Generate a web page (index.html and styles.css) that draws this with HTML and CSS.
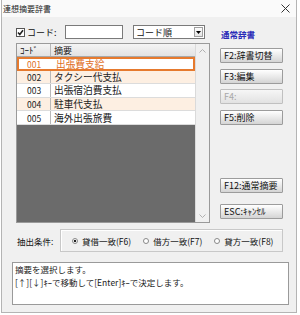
FILE: index.html
```html
<!DOCTYPE html>
<html lang="ja">
<head>
    <meta charset="UTF-8">
    <title>連想摘要辞書</title>
    <link rel="stylesheet" href="styles.css">
</head>
<body>
    <div class="window">
        <div class="titlebar">
            <span class="title">連想摘要辞書</span>
            <svg class="close" width="9" height="9" viewBox="0 0 9 9">
                <path d="M0.5 0.5 L8.5 8.5 M8.5 0.5 L0.5 8.5" stroke="#333" stroke-width="1" fill="none"/>
            </svg>
        </div>

        <div class="content">
            <div class="main">
                <!-- 検索行 -->
                <div class="search">
                    <svg class="check" width="9" height="9" viewBox="0 0 9 9">
                        <rect x="0.5" y="0.5" width="8" height="8" fill="#fff" stroke="#555"/>
                        <path d="M2 4.5 L3.8 6.5 L7 2.3" stroke="#222" stroke-width="1.6" fill="none"/>
                    </svg>
                    <label class="search-label">コード:</label>
                    <input class="code-input" type="text">
                    <div class="select">
                        <span class="select-text">コード順</span>
                        <span class="select-btn">
                            <svg width="5" height="3" viewBox="0 0 5 3"><path d="M0 0 H5 L2.5 3 Z" fill="#000"/></svg>
                        </span>
                    </div>
                </div>
                <div class="dict-name">通常辞書</div>

                <!-- 一覧 -->
                <div class="list">
                    <div class="list-body">
                        <div class="list-head">
                            <span class="col-code">ｺｰﾄﾞ</span>
                            <span class="col-name">摘要</span>
                        </div>
                        <div class="row selected"><span class="col-code">001</span><span class="col-name">出張費支給</span></div>
                        <div class="row alt"><span class="col-code">002</span><span class="col-name">タクシー代支払</span></div>
                        <div class="row"><span class="col-code">003</span><span class="col-name">出張宿泊費支払</span></div>
                        <div class="row alt"><span class="col-code">004</span><span class="col-name">駐車代支払</span></div>
                        <div class="row"><span class="col-code">005</span><span class="col-name">海外出張旅費</span></div>
                        <div class="list-empty"></div>
                    </div>
                    <div class="scrollbar">
                        <svg width="7" height="4" viewBox="0 0 7 4"><path d="M0.5 3.5 L3.5 0.5 L6.5 3.5" stroke="#b0b0b0" fill="none"/></svg>
                        <svg width="7" height="4" viewBox="0 0 7 4"><path d="M0.5 0.5 L3.5 3.5 L6.5 0.5" stroke="#b0b0b0" fill="none"/></svg>
                    </div>
                </div>

                <!-- ボタン -->
                <div class="buttons">
                    <div class="btn-group">
                        <button class="btn">F2:辞書切替</button>
                        <button class="btn">F3:編集</button>
                        <button class="btn" disabled>F4:</button>
                        <button class="btn">F5:削除</button>
                    </div>
                    <div class="btn-group bottom">
                        <button class="btn">F12:通常摘要</button>
                        <button class="btn">ESC:ｷｬﾝｾﾙ</button>
                    </div>
                </div>
            </div>

            <!-- 抽出条件 -->
            <div class="filter">
                <span class="filter-label">抽出条件:</span>
                <div class="radio-box">
                    <span class="radio on"><i></i>貸借一致(F6)</span>
                    <span class="radio"><i></i>借方一致(F7)</span>
                    <span class="radio"><i></i>貸方一致(F8)</span>
                </div>
            </div>

            <div class="memo">
                摘要を選択します。<br>
                [↑][↓]ｷｰで移動して[Enter]ｷｰで決定します。
            </div>
        </div>
    </div>
</body>
</html>
```

FILE: styles.css
```css
* {
    box-sizing: border-box;
}
body {
    margin: 0;
    background-color: #fff;
    font-family: "Noto Sans CJK JP", "Noto Sans", sans-serif;
    color: #111;
}
.window {
    width: 296px;
    height: 313px;
    margin-left: 1px;
    border: 1px solid #b4b4b4;
    border-top: none;
    background-color: #f0f0f0;
}
.titlebar {
    height: 17px;
    background-color: #fafafa;
    display: flex;
    align-items: center;
    justify-content: space-between;
    padding: 0 6px 0 1px;
    font-size: 8px;
    color: #222;
}
.content {
    padding: 8px 0 0 10px;
}
.main {
    margin-left: 4px;
    display: grid;
    grid-template-columns: 194px 63px;
    grid-template-rows: 14px 180px;
    column-gap: 10px;
    row-gap: 4px;
}
.search {
    display: flex;
    align-items: center;
    font-size: 9px;
}
.check {
    display: block;
}
.search-label {
    width: 38px;
    margin-left: 2px;
}
.code-input {
    width: 58px;
    height: 14px;
    border: 1px solid #7a7a7a;
    background: #fff;
    padding: 0;
}
.select {
    width: 72px;
    height: 14px;
    margin-left: 10px;
    border: 1px solid #7a7a7a;
    background: #fff;
    display: flex;
    align-items: center;
    justify-content: space-between;
    padding: 0 1px 0 2px;
}
.select-btn {
    width: 9px;
    height: 10px;
    border: 1px solid #a0a0a0;
    background: linear-gradient(#fdfdfd, #e4e4e4);
    display: flex;
    align-items: center;
    justify-content: center;
}
.dict-name {
    font-size: 8.5px;
    font-weight: bold;
    color: #2a2ab8;
    padding-left: 1px;
    padding-top: 3px;
}
.list {
    display: flex;
    border: 1px solid #9a9a9a;
    background: #f0f0f0;
}
.list-body {
    flex: 1;
    display: flex;
    flex-direction: column;
}
.list-head {
    height: 13px;
    display: flex;
    align-items: center;
    background: linear-gradient(#f4f4f4, #e2e2e2);
    border-bottom: 1px solid #a8a8a8;
    font-size: 9px;
}
.col-code {
    width: 34px;
    height: 100%;
    display: flex;
    align-items: center;
    border-right: 1px solid #b8b8b8;
}
.list-head .col-code {
    padding-left: 3px;
}
.col-name {
    padding-left: 3px;
}
.row {
    height: 13.6px;
    display: flex;
    align-items: center;
    background: #fff;
    border-bottom: 1px solid #dcdcdc;
    font-size: 9.7px;
    color: #222;
}
.row .col-code {
    padding-left: 10px;
    font-size: 8.5px;
}
.row.alt {
    background: #fdefe2;
}
.row.selected {
    border: 2px solid #e67a2e;
    color: #e0701f;
}
.row.selected .col-code {
    padding-left: 8px;
    border-right-color: transparent;
}
.list-empty {
    flex: 1;
    background: #6b6b6b;
}
.scrollbar {
    width: 14px;
    display: flex;
    flex-direction: column;
    justify-content: space-between;
    align-items: center;
    padding: 5px 0 4px;
    background: #f0f0f0;
    border-left: 1px solid #dadada;
}
.buttons {
    display: flex;
    flex-direction: column;
    justify-content: space-between;
    padding: 5px 0 4px;
}
.btn-group {
    display: flex;
    flex-direction: column;
    gap: 5.5px;
}
.btn-group.bottom {
    gap: 11px;
}
.btn {
    height: 15px;
    width: 63px;
    padding: 0 0 0 3px;
    text-align: left;
    font-family: inherit;
    font-size: 9px;
    color: #111;
    border: 1px solid #9c9c9c;
    border-radius: 1px;
    background: linear-gradient(#ffffff, #e6e6e6 60%, #d4d4d4);
}
.btn:disabled {
    color: #a8a8a8;
    background: linear-gradient(#f6f6f6, #e2e2e2);
    border-color: #c0c0c0;
}
.filter {
    display: flex;
    align-items: center;
    margin: 6px 0 0 5px;
    font-size: 8.5px;
}
.filter-label {
    width: 43px;
}
.radio-box {
    width: 223px;
    height: 23px;
    border: 1px solid #c8c8c8;
    box-shadow: inset 1px 1px #fff;
    display: flex;
    align-items: center;
    padding-left: 11px;
    gap: 12px;
}
.radio {
    display: flex;
    align-items: center;
    gap: 4px;
}
.radio i {
    width: 6px;
    height: 6px;
    border-radius: 50%;
    border: 1px solid #888;
    background: #fff;
}
.radio.on i {
    background: radial-gradient(circle, #222 1.3px, #fff 1.6px);
}
.memo {
    width: 277px;
    height: 43px;
    margin-top: 10px;
    background: #fff;
    border: 1px solid #9a9a9a;
    padding: 0 2px;
    font-size: 8.5px;
    line-height: 12.5px;
    color: #222;
}
```
